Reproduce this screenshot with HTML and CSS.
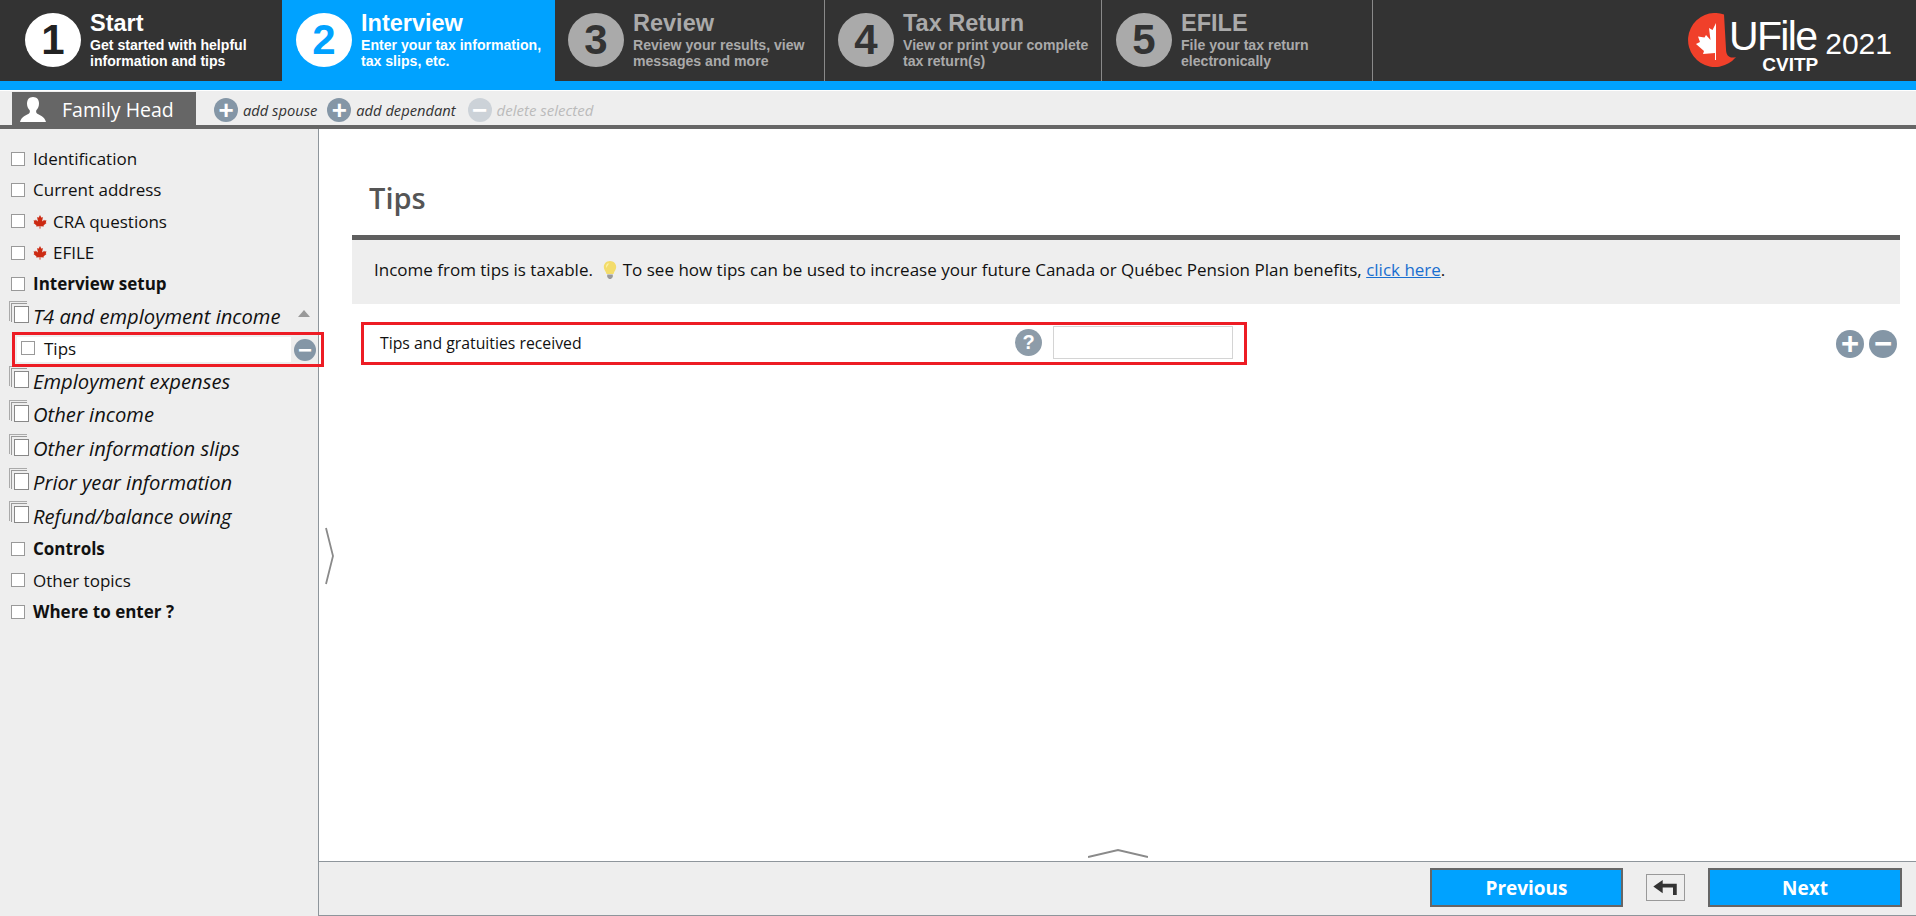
FILE: index.html
```html
<!DOCTYPE html>
<html lang="en">
<head>
<meta charset="utf-8">
<title>UFile 2021 CVITP - Tips</title>
<link rel="stylesheet" href="styles.css">
</head>
<body>
<svg class="defs" width="0" height="0" aria-hidden="true">
  <defs>
    <path id="leaf" d="M12 1l-2.2 4c-.3.4-.7.4-1.1.2L7 4.300l1.200 6.300c.2 1.100-.5 1.500-1.200.7L4.700 8.700l-.4 1.300c-.1.300-.4.400-.8.300L1 9.800l.9 3.200c.2.700.3 1-.2 1.200l-.9.400 4.800 3.900c.2.200.3.400.2.700l-.4 1.400 5-.6c.2 0 .4.100.4.300L10.500 24h1l-.2-3.600c0-.2.200-.3.400-.3h.6c.2 0 .4.100.4.300l-.2 3.600h1l-.3-3.600c0-.2.200-.3.400-.3l5 .6-.4-1.400c-.1-.3 0-.5.200-.7l4.800-3.900-.9-.4c-.5-.2-.4-.5-.2-1.200l.9-3.200-2.500.5c-.4.100-.7 0-.8-.3l-.4-1.300L17 11.300c-.7.800-1.400.4-1.200-.7L17 4.300l-1.700.9c-.4.200-.8.200-1.100-.2z"/>
  </defs>
</svg>

<header class="steps">
  <div class="step step-first">
    <span class="num num-on">1</span>
    <div class="step-text"><div class="step-title">Start</div><div class="step-sub">Get started with helpful<br>information and tips</div></div>
  </div>
  <div class="step step-active">
    <span class="num num-blue">2</span>
    <div class="step-text"><div class="step-title">Interview</div><div class="step-sub">Enter your tax information,<br>tax slips, etc.</div></div>
  </div>
  <div class="step step-3 step-off">
    <span class="num">3</span>
    <div class="step-text"><div class="step-title">Review</div><div class="step-sub">Review your results, view<br>messages and more</div></div>
  </div>
  <div class="step step-4 step-off">
    <span class="num">4</span>
    <div class="step-text"><div class="step-title">Tax Return</div><div class="step-sub">View or print your complete<br>tax return(s)</div></div>
  </div>
  <div class="step step-5 step-off">
    <span class="num">5</span>
    <div class="step-text"><div class="step-title">EFILE</div><div class="step-sub">File your tax return<br>electronically</div></div>
  </div>
  <div class="logo">
    <svg class="logo-mark" viewBox="0 0 50 54" aria-hidden="true">
      <path fill="#f0402a" d="M36 1.500A27 27 0 1 0 48 44C42 46 38 43 38 36z"/>
      <path fill="#fff" d="M28 10l-3.500 7-3.500-2 1.500 12-4.500-5-1.500 2.500-6.500-1 2 5.500-4 2 8 7-1 3 12-1v7h1z"/>
    </svg>
    <div class="logo-words"><div class="logo-name">UFile</div><div class="logo-sub">CVITP</div></div>
    <div class="logo-year">2021</div>
  </div>
</header>
<div class="band"></div>

<nav class="people">
  <div class="person-tab">
    <svg class="person-icon" viewBox="0 0 26 26" aria-hidden="true"><path fill="#fff" d="M13 1c-4 0-6 2.800-6 6.500 0 2.700 1 5 2.500 6.500.6.700.5 2.700-.5 3.500C7.500 18.800 1.500 20 0 26h26c-1.500-6-7.500-7.200-9-8.500-1-.8-1.100-2.800-.5-3.500C18 12.500 19 10.200 19 7.500 19 3.800 17 1 13 1z"/></svg>
    <span class="person-name">Family Head</span>
  </div>
  <div class="person-action"><span class="round round-24">+</span><em>add spouse</em></div>
  <div class="person-action"><span class="round round-24">+</span><em>add dependant</em></div>
  <div class="person-action person-disabled"><span class="round round-24">&minus;</span><em>delete selected</em></div>
</nav>

<div class="workspace">
  <aside class="sidebar">
    <ul class="tree">
      <li class="row"><i class="box"></i>Identification</li>
      <li class="row"><i class="box"></i>Current address</li>
      <li class="row"><i class="box"></i><svg class="maple" viewBox="0 0 24 24" aria-hidden="true"><use href="#leaf"/></svg>CRA questions</li>
      <li class="row"><i class="box"></i><svg class="maple" viewBox="0 0 24 24" aria-hidden="true"><use href="#leaf"/></svg>EFILE</li>
      <li class="row row-bold"><i class="box"></i>Interview setup</li>
      <li class="row row-group"><i class="stack"></i>T4 and employment income<i class="collapse"></i></li>
      <li class="row-selected"><div class="row-selected-body"><i class="box box-small"></i>Tips</div><span class="round round-22">&minus;</span></li>
      <li class="row row-group"><i class="stack"></i>Employment expenses</li>
      <li class="row row-group"><i class="stack"></i>Other income</li>
      <li class="row row-group"><i class="stack"></i>Other information slips</li>
      <li class="row row-group"><i class="stack"></i>Prior year information</li>
      <li class="row row-group"><i class="stack"></i>Refund/balance owing</li>
      <li class="row row-bold"><i class="box"></i>Controls</li>
      <li class="row"><i class="box"></i>Other topics</li>
      <li class="row row-bold"><i class="box"></i>Where to enter ?</li>
    </ul>
  </aside>
  <main class="main">
    <svg class="side-handle" viewBox="0 0 9 58" aria-hidden="true"><path d="M1 1l7 28-7 28" fill="none" stroke="#8a8a8a" stroke-width="1.800"/></svg>
    <div class="content">
      <h1 class="title">Tips</h1>
      <div class="note">Income from tips is taxable. <svg class="bulb" viewBox="0 0 14 18" aria-hidden="true"><path fill="#f3dc6a" d="M7 0C3.200 0 .8 2.800.8 6c0 2.600 2 4.200 2.700 7h7c.7-2.800 2.700-4.400 2.700-7C13.200 2.800 10.800 0 7 0z"/><path fill="#fdf1a8" d="M4.500 2.500C3 3.500 2.700 5.500 3.600 7c.6-2 1.500-3.500 2.900-4.500z"/><path fill="#9a9a9a" d="M4.200 13.500h5.600V16L8 18H6l-1.800-2z"/></svg> To see how tips can be used to increase your future Canada or Québec Pension Plan benefits, <a href="#" class="link">click here</a>.</div>
      <div class="entry-row">
        <div class="entry">
          <span class="entry-label">Tips and gratuities received</span>
          <span class="round round-27 help">?</span>
          <input class="entry-input" type="text" aria-label="Tips and gratuities received">
        </div>
        <div class="entry-tools"><span class="round round-28">+</span><span class="round round-28">&minus;</span></div>
      </div>
    </div>
    <footer class="footer">
      <svg class="foot-handle" viewBox="0 0 60 9" aria-hidden="true"><path d="M0 8l30-7 30 7" fill="none" stroke="#8a8a8a" stroke-width="1.800"/></svg>
      <button class="btn btn-prev" type="button">Previous</button>
      <button class="btn-back" type="button" aria-label="Back"><svg viewBox="0 0 26 16" aria-hidden="true"><path fill="#333" d="M0 7l10-7v4h15v12h-4V8H10v6z"/></svg></button>
      <button class="btn btn-next" type="button">Next</button>
    </footer>
  </main>
</div>
</body>
</html>
```
FILE: styles.css
```css
* { box-sizing: border-box; }
html, body { height: 100%; }
body {
  margin: 0;
  height: 916px;
  overflow: hidden;
  display: flex;
  flex-direction: column;
  background: #fff;
  color: #111;
  font-family: "Open Sans", "Noto Sans", "Liberation Sans", sans-serif;
}
.defs { position: absolute; }

/* Steps header */
.steps {
  height: 81px;
  flex: none;
  display: flex;
  background: #333;
  font-family: "Liberation Sans", Arial, sans-serif;
}
.step {
  display: flex;
  align-items: flex-start;
  gap: 9px;
  padding: 13px 0 0 14px;
  color: #fff;
  border-right: 1px solid #8a8a8a;
}
.step-first { width: 282px; padding-left: 25px; border-right: 0; }
.step-active { width: 273px; background: #00a2ff; border-right: 0; }
.step-3 { width: 270px; padding-left: 13px; }
.step-4 { width: 277px; padding-left: 13px; }
.step-5 { width: 271px; padding-left: 14px; }
.step-off { color: #aaa; }
.num {
  width: 56px;
  height: 54px;
  flex: none;
  border-radius: 50%;
  background: #aaa;
  color: #333;
  font-weight: 700;
  font-size: 42px;
  line-height: 54px;
  text-align: center;
}
.num-on { background: #fff; color: #222; }
.num-blue { background: #fff; color: #00a2ff; }
.step-text { font-weight: 700; }
.step-title { font-size: 23.500px; line-height: 23px; margin-top: -1px; }
.step-sub { font-size: 14.100px; line-height: 16px; margin-top: 2px; }

.logo {
  margin-left: auto;
  display: flex;
  align-items: flex-start;
  color: #fff;
  padding: 13px 24px 0 0;
  font-family: "Liberation Sans", Arial, sans-serif;
}
.logo-mark { width: 50px; height: 54px; flex: none; }
.logo-words { margin-left: -9px; text-align: right; }
.logo-name { font-size: 41px; line-height: 38px; letter-spacing: -1.700px; margin-top: 4px; }
.logo-sub { font-size: 19px; font-weight: 700; line-height: 15px; margin: 2px -2px 0 0; }
.logo-year { font-size: 30px; line-height: 30px; margin: 16px 0 0 9px; }

.band { height: 10px; flex: none; background: #00a2ff; border-bottom: 1px solid #fff; }

/* Family bar */
.people {
  height: 38px;
  flex: none;
  display: flex;
  align-items: flex-start;
  padding: 1px 0 0 12px;
  background: #eee;
  border-bottom: 4px solid #666;
}
.person-tab {
  width: 184px;
  height: 33px;
  display: flex;
  align-items: center;
  padding-left: 8px;
  gap: 16px;
  background: #666;
  color: #fff;
  font-size: 19.500px;
  margin-right: 18px;
}
.person-name { padding-top: 2px; }
.person-icon { width: 26px; height: 26px; flex: none; }
.person-action {
  display: flex;
  align-items: center;
  gap: 5px;
  height: 28px;
  margin: 4px 10px 0 0;
  font-size: 14.700px;
  color: #333;
}
.person-disabled { color: #bbb; margin-left: 2px; font-size: 15px; }
.person-disabled .round { background: #ccd2d8; }
.round {
  display: inline-flex;
  align-items: center;
  justify-content: center;
  flex: none;
  border-radius: 50%;
  background: #8496a6;
  color: #fff;
  font-family: "Liberation Sans", Arial, sans-serif;
  font-weight: 700;
}
.round-24 { width: 24px; height: 24px; font-size: 26px; }
.round-22 { width: 22px; height: 22px; font-size: 24px; }
.round-27 { width: 27px; height: 27px; font-size: 30px; }
.round-28 { width: 28px; height: 28px; font-size: 31px; }
.help { font-size: 20px; margin-left: auto; background: #8d9ca9; }

/* Workspace */
.workspace { flex: 1; min-height: 0; display: flex; }
.sidebar {
  width: 319px;
  flex: none;
  background: #eee;
  border-right: 1px solid #8e959b;
  padding-top: 14px;
}
.tree { list-style: none; margin: 0; padding: 0; font-size: 17px; }
.row {
  display: flex;
  align-items: center;
  height: 31.300px;
  padding-left: 11px;
  white-space: nowrap;
}
.row-bold { font-weight: 700; }
.row-group {
  height: 33.800px;
  padding: 0 0 1px 9px;
  font-style: italic;
  font-size: 20.200px;
}
.box {
  width: 14px;
  height: 14px;
  flex: none;
  margin-right: 8px;
  background: #fff;
  border: 1px solid #999;
}
.box-small { margin-right: 9px; }
.stack {
  position: relative;
  width: 18px;
  height: 20px;
  flex: none;
  margin: -9px 6px 0 0;
  border: 1px solid #aaa;
  border-right-width: 0;
  border-bottom-width: 0;
}
.stack::before {
  content: "";
  position: absolute;
  left: 1px;
  top: 1px;
  width: 15px;
  height: 18px;
  border: 1px solid #999;
  border-right-width: 0;
  border-bottom-width: 0;
}
.stack::after {
  content: "";
  position: absolute;
  left: 4px;
  top: 4px;
  width: 13px;
  height: 15px;
  background: #fff;
  border: 1px solid #888;
}
.collapse {
  width: 0;
  height: 0;
  margin: -4px 8px 0 auto;
  border: 6.500px solid transparent;
  border-top-width: 0;
  border-bottom: 7px solid #999;
}
.maple { width: 14px; height: 15px; flex: none; margin-right: 6px; fill: #cc2a12; }
.row-selected {
  position: relative;
  z-index: 1;
  width: 312px;
  height: 35px;
  margin: -1px 0 -3px 12px;
  padding: 2px 5px 2px 2px;
  display: flex;
  align-items: center;
  border: 3px solid #ed1c24;
}
.row-selected-body {
  flex: 1;
  height: 25px;
  display: flex;
  align-items: center;
  padding: 0 0 3px 4px;
  background: #fff;
}
.row-selected .round { margin-left: 3px; }

/* Main */
.main { position: relative; flex: 1; min-width: 0; display: flex; flex-direction: column; }
.side-handle { position: absolute; left: 6px; top: 398px; width: 9px; height: 58px; }
.content { flex: 1; min-height: 0; padding: 0 16px 0 33px; }
.title {
  margin: 0;
  height: 111px;
  padding: 50px 0 0 17px;
  font-size: 29px;
  line-height: 38px;
  font-weight: 600;
  color: #555;
  border-bottom: 5px solid #5f5f5f;
}
.note {
  height: 64px;
  line-height: 60px;
  white-space: nowrap;
  padding-left: 22px;
  background: #eee;
  font-size: 17px;
}
.bulb { display: inline-block; width: 14px; height: 18px; vertical-align: -3px; margin: 0 1px 0 6px; }
.link { color: #1a6fd0; }
.entry-row { display: flex; align-items: center; margin-top: 18px; }
.entry {
  width: 886px;
  height: 43px;
  margin-left: 9px;
  display: flex;
  align-items: center;
  padding: 0 11px 2px 16px;
  border: 3px solid #ed1c24;
}
.entry-label { font-size: 15.800px; }
.entry-input {
  width: 180px;
  height: 33px;
  margin-left: 11px;
  border: 1px solid #d4d4d4;
  background: #fff;
}
.entry-tools { display: flex; gap: 5px; margin-left: auto; margin-right: 3px; }

/* Footer */
.footer {
  position: relative;
  height: 55px;
  flex: none;
  display: flex;
  align-items: center;
  justify-content: flex-end;
  padding: 0 14px 2px 0;
  background: #eee;
  border-top: 1px solid #8e959b;
  border-bottom: 1px solid #8e959b;
}
.foot-handle { position: absolute; left: 769px; top: -13px; width: 60px; height: 9px; }
.btn {
  height: 39px;
  border: 2px solid #666;
  background: #00a2ff;
  color: #fff;
  font-family: inherit;
  font-size: 19px;
  font-weight: 700;
}
.btn-prev { width: 193px; }
.btn-next { width: 194px; }
.btn-back {
  width: 39px;
  height: 27px;
  margin: 0 23px;
  padding: 0;
  display: flex;
  align-items: center;
  justify-content: center;
  background: #eee;
  border: 1px solid #999;
}
.btn-back svg { width: 25px; height: 15px; }
```
